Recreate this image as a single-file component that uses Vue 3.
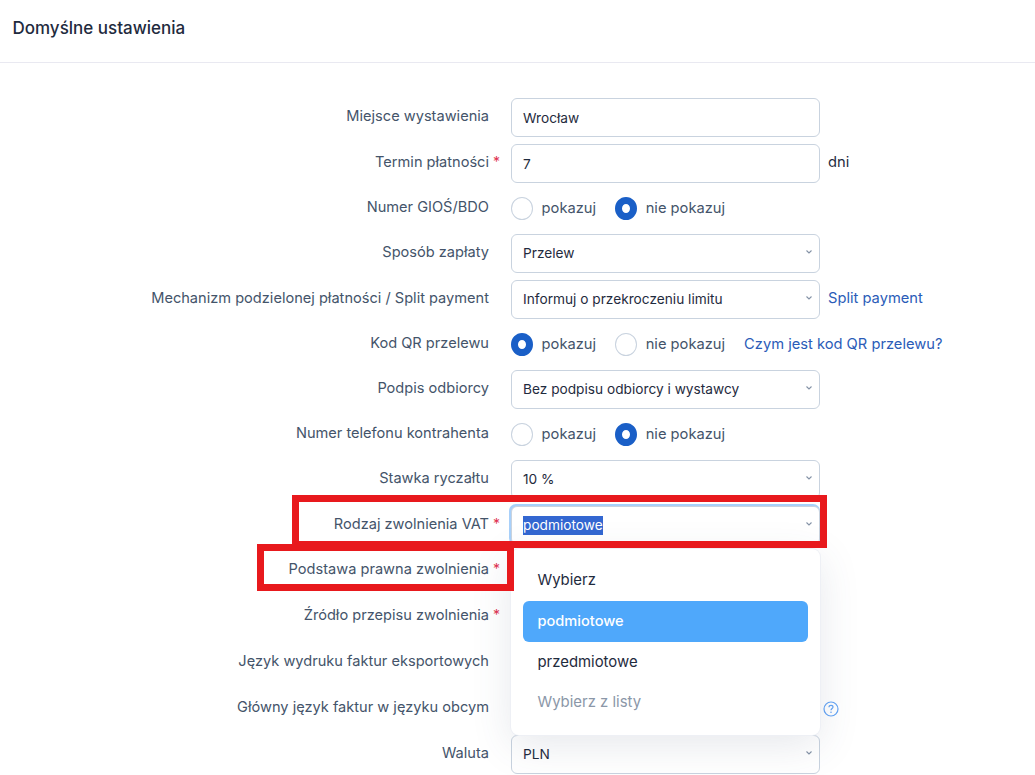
<script setup>
const rows = [
  { label: 'Miejsce wystawienia', type: 'input', value: 'Wrocław' },
  { label: 'Termin płatności', req: true, type: 'input', value: '7', after: 'dni' },
  { label: 'Numer GIOŚ/BDO', type: 'radio', on: 1 },
  { label: 'Sposób zapłaty', type: 'select', value: 'Przelew' },
  { label: 'Mechanizm podzielonej płatności / Split payment', type: 'select', value: 'Informuj o przekroczeniu limitu', link: 'Split payment' },
  { label: 'Kod QR przelewu', type: 'radio', on: 0, link: 'Czym jest kod QR przelewu?' },
  { label: 'Podpis odbiorcy', type: 'select', value: 'Bez podpisu odbiorcy i wystawcy' },
  { label: 'Numer telefonu kontrahenta', type: 'radio', on: 1 },
  { label: 'Stawka ryczałtu', type: 'select', value: '10 %' },
  { label: 'Rodzaj zwolnienia VAT', req: true, type: 'select', value: 'podmiotowe', focus: true },
  { label: 'Podstawa prawna zwolnienia', req: true, type: 'select', value: '' },
  { label: 'Źródło przepisu zwolnienia', req: true, type: 'select', value: '' },
  { label: 'Język wydruku faktur eksportowych', type: 'select', value: '' },
  { label: 'Główny język faktur w języku obcym', type: 'select', value: '', help: true },
  { label: 'Waluta', type: 'select', value: 'PLN' },
]
const options = [
  { text: 'Wybierz' },
  { text: 'podmiotowe', active: true },
  { text: 'przedmiotowe' },
  { text: 'Wybierz z listy', muted: true },
]
</script>

<template>
  <div class="page">
    <header class="head">Domyślne ustawienia</header>
    <div class="form">
      <div v-for="row in rows" :key="row.label" class="row" :class="{ tall: row.type !== 'radio' }">
        <div class="label">
          {{ row.label }}<span v-if="row.req" class="req">*</span>
        </div>
        <div v-if="row.type === 'radio'" class="radios">
          <span class="dot" :class="{ on: row.on === 0 }"></span>
          <span class="opt">pokazuj</span>
          <span class="dot" :class="{ on: row.on === 1 }"></span>
          <span class="opt">nie pokazuj</span>
          <a v-if="row.link" class="link qr">{{ row.link }}</a>
        </div>
        <div v-else class="field" :class="{ focus: row.focus, plain: row.type === 'input' }">
          <span class="val" :class="{ sel: row.focus }">{{ row.value }}</span>
          <svg v-if="row.type === 'select'" class="chev" width="8" height="6" viewBox="0 0 8 6">
            <path d="M1.5 1.5 4 4 6.5 1.5" fill="none" stroke="#8492a6" stroke-width="1.1" />
          </svg>
        </div>
        <span v-if="row.after" class="after">{{ row.after }}</span>
        <a v-if="row.link && row.type !== 'radio'" class="link after">{{ row.link }}</a>
        <svg v-if="row.help" class="help" width="16" height="16" viewBox="0 0 16 16">
          <circle cx="8" cy="8" r="7" fill="none" stroke="#63a4f5" stroke-width="1.2" />
          <path d="M6 6.2C6 5 6.9 4.3 8 4.3S10 5 10 6.1C10 7.4 8 7.6 8 9.2" fill="none" stroke="#63a4f5" stroke-width="1.2" />
          <circle cx="8" cy="11.3" r=".8" fill="#63a4f5" />
        </svg>
      </div>
    </div>

    <div class="menu">
      <div v-for="o in options" :key="o.text" class="item" :class="{ active: o.active, muted: o.muted }">{{ o.text }}</div>
    </div>

    <div class="mark mark-a"></div>
    <div class="mark mark-b"></div>
  </div>
</template>

<style scoped>
.page {
  position: relative;
  width: 1035px;
  height: 775px;
  overflow: hidden;
  background: #fff;
  font-family: Inter, "Noto Sans", sans-serif;
  color: #1f2b3e;
}
.head {
  box-sizing: border-box;
  height: 63px;
  padding: 18px 12.5px 0;
  border-bottom: 1px solid #e9e9f1;
  font-size: 17px;
  font-weight: 500;
  line-height: 20px;
}
.form {
  padding-top: 35px;
}
.row {
  display: flex;
  align-items: center;
  height: 37.1px;
  margin-bottom: 7px;
}
.row.tall {
  height: 38.9px;
}
.label {
  position: relative;
  flex: none;
  width: 489px;
  margin-right: 22px;
  padding-bottom: 3px;
  text-align: right;
  font-size: 14.6px;
  line-height: 20px;
  color: #44546a;
  white-space: nowrap;
}
.req {
  position: absolute;
  left: 493px;
  top: 0;
  color: #e0314f;
  font-size: 14px;
}
.field {
  position: relative;
  display: flex;
  align-items: center;
  box-sizing: border-box;
  flex: none;
  width: 309px;
  height: 100%;
  padding: 0 11px;
  border: 1px solid #c9d3df;
  border-radius: 6px;
  background: #fff;
  font-size: 13.7px;
  color: #1f2b3e;
}
.field.plain {
  padding-top: 2px;
}
.field.focus {
  box-shadow: -1px -1px 0 1px #a8d0fa;
}
.val {
  line-height: 19px;
}
.val.sel {
  background: #3367d1;
  color: #fff;
}
.chev {
  position: absolute;
  right: 6px;
  top: 14px;
}
.radios {
  display: flex;
  align-items: center;
  font-size: 14.7px;
  color: #44546a;
}
.dot {
  box-sizing: border-box;
  width: 22px;
  height: 23px;
  margin-right: 8.6px;
  border: 1px solid #c9d3df;
  border-radius: 50%;
  background: #fff;
}
.dot.on {
  border: 7.5px solid #1a5fc7;
}
.opt {
  margin-right: 19px;
  padding-bottom: 1px;
}
.link {
  color: #2b5cb8;
  font-size: 14.7px;
  white-space: nowrap;
}
.qr {
  padding-bottom: 1px;
}
.after {
  margin-left: 8px;
  padding-bottom: 3px;
  font-size: 14.7px;
}
.help {
  margin-left: 3px;
}
.menu {
  position: absolute;
  left: 511px;
  top: 549px;
  width: 309px;
  height: 186px;
  box-sizing: border-box;
  padding: 11px 12px;
  background: #fff;
  border-radius: 8px;
  box-shadow: 0 0 0 1px #eef0f5, 0 10px 40px rgba(60, 75, 110, .13);
}
.item {
  height: 41px;
  padding-left: 14.5px;
  font-size: 14.9px;
  font-weight: 400;
  line-height: 40px;
  color: #1f2b3e;
  border-radius: 6px;
}
.item.active {
  background: #4fa8fb;
  color: #fff;
  font-size: 14.6px;
  font-weight: 500;
}
.item.muted {
  margin-top: -1px;
  color: #8b97a8;
}
.mark {
  position: absolute;
  box-sizing: border-box;
  border: 7px solid #e8191d;
}
.mark-a {
  left: 292px;
  top: 495px;
  width: 535px;
  height: 53px;
}
.mark-b {
  left: 257px;
  top: 544px;
  width: 257px;
  height: 47px;
}
</style>
